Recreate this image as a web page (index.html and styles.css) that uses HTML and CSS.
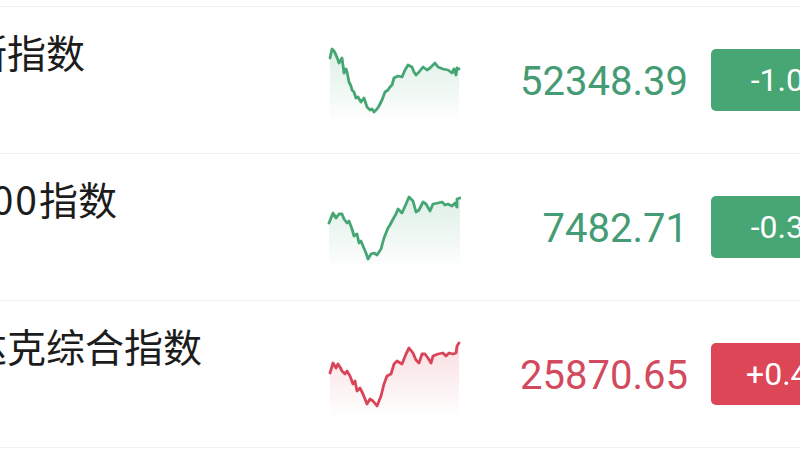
FILE: index.html
```html
<!DOCTYPE html>
<html lang="zh-CN">
<head>
    <meta charset="UTF-8">
    <meta name="viewport" content="width=device-width, initial-scale=1.0">
    <title>全球指数</title>
    <link rel="stylesheet" href="styles.css">
</head>
<body>
    <div class="index-list">
        <div class="index-row down">
            <div class="index-name">道琼斯指数</div>
            <svg class="spark" width="134" height="80" viewBox="0 0 134 80">
                <defs>
                    <linearGradient id="fillGreen1" x1="0" y1="0" x2="0" y2="1">
                        <stop offset="0" stop-color="#45a673" stop-opacity="0.18"/>
                        <stop offset="1" stop-color="#45a673" stop-opacity="0"/>
                    </linearGradient>
                </defs>
                <path class="area" fill="url(#fillGreen1)" d="M3 15 L5 6 L9 12 L12 20 L15 15 L17 30 L20 29 L22 39 L25 47 L27 49 L29 55 L31 54 L34 59 L37 55 L40 64 L43 67 L47 69 L50 66 L55 57 L58 49 L61 47 L65 42 L67 35 L71 33 L75 34 L78 27 L81 22 L85 24 L89 32 L92 29 L96 24 L100 27 L103 25 L108 20 L111 24 L116 26 L121 27 L125 30 L127 26 L129 32 L130 25 L132 26 L132 80 L3 80 Z"/>
                <path class="line" d="M3 15 L5 6 L7 8 L9 12 L11 17 L12 20 L15 15 L17 30 L19 26 L20 29 L22 39 L24 43 L25 47 L27 49 L29 55 L31 54 L34 59 L37 55 L40 64 L43 67 L45 66 L47 69 L50 66 L52 63 L55 57 L58 49 L61 47 L63 44 L65 42 L67 35 L71 33 L75 34 L78 27 L81 22 L85 24 L87 29 L89 32 L92 29 L96 24 L100 27 L103 25 L106 22 L108 20 L111 24 L116 26 L121 27 L125 30 L127 26 L129 32 L130 25 L132 26"/>
            </svg>
            <div class="index-price">52348.39</div>
            <div class="index-change">-1.05%</div>
        </div>

        <div class="index-row down">
            <div class="index-name">标普<span class="num">500</span>指数</div>
            <svg class="spark" width="134" height="80" viewBox="0 0 134 80">
                <defs>
                    <linearGradient id="fillGreen2" x1="0" y1="0" x2="0" y2="1">
                        <stop offset="0" stop-color="#45a673" stop-opacity="0.18"/>
                        <stop offset="1" stop-color="#45a673" stop-opacity="0"/>
                    </linearGradient>
                </defs>
                <path class="area" fill="url(#fillGreen2)" d="M2 33 L6 23 L9 28 L12 24 L15 24 L17 29 L20 33 L22 31 L25 39 L27 46 L30 44 L32 53 L36 56 L39 63 L41 69 L44 64 L47 63 L50 65 L54 59 L57 48 L61 38 L65 31 L69 24 L71 19 L75 23 L79 14 L82 7 L86 11 L89 22 L92 20 L96 12 L99 14 L103 21 L106 14 L111 13 L115 12 L118 15 L121 14 L125 16 L128 13 L130 17 L130 9 L133 8 L133 80 L2 80 Z"/>
                <path class="line" d="M2 33 L6 23 L9 28 L12 24 L15 24 L17 29 L20 33 L22 31 L25 39 L27 46 L30 44 L32 53 L34 51 L36 56 L39 63 L41 69 L44 64 L47 63 L50 65 L54 59 L57 48 L61 38 L63 35 L65 31 L69 24 L71 19 L75 23 L79 14 L82 7 L86 11 L89 22 L92 20 L96 12 L99 14 L103 21 L106 14 L111 13 L115 12 L118 15 L121 14 L125 16 L128 13 L130 17 L130 9 L133 8"/>
            </svg>
            <div class="index-price">7482.71</div>
            <div class="index-change">-0.32%</div>
        </div>

        <div class="index-row up">
            <div class="index-name">纳斯达克综合指数</div>
            <svg class="spark" width="134" height="80" viewBox="0 0 134 80">
                <defs>
                    <linearGradient id="fillRed" x1="0" y1="0" x2="0" y2="1">
                        <stop offset="0" stop-color="#dc4656" stop-opacity="0.18"/>
                        <stop offset="1" stop-color="#dc4656" stop-opacity="0"/>
                    </linearGradient>
                </defs>
                <path class="area" fill="url(#fillRed)" d="M3 36 L6 26 L9 31 L11 27 L15 34 L18 37 L20 34 L23 39 L26 47 L28 44 L30 54 L33 51 L36 57 L40 67 L43 62 L46 64 L50 69 L54 59 L57 47 L60 39 L64 37 L67 27 L70 24 L75 27 L79 17 L82 11 L86 16 L89 23 L92 26 L95 17 L98 17 L101 21 L104 26 L106 19 L111 17 L116 16 L119 19 L122 16 L126 17 L129 16 L130 9 L132 6 L132 80 L3 80 Z"/>
                <path class="line" d="M3 36 L6 26 L9 31 L11 27 L13 30 L15 34 L18 37 L20 34 L23 39 L26 47 L28 44 L30 54 L33 51 L36 57 L38 62 L40 67 L43 62 L46 64 L50 69 L54 59 L57 47 L60 39 L64 37 L67 27 L70 24 L75 27 L79 17 L82 11 L86 16 L89 23 L92 26 L95 17 L98 17 L101 21 L104 26 L106 19 L111 17 L116 16 L119 19 L122 16 L126 17 L129 16 L130 9 L132 6"/>
            </svg>
            <div class="index-price">25870.65</div>
            <div class="index-change">+0.48%</div>
        </div>
    </div>
</body>
</html>
```

FILE: styles.css
```css
body {
    margin: 0;
    background: #fff;
    font-family: Roboto, "Noto Sans", "Noto Sans CJK SC", sans-serif;
    overflow: hidden;
}

.index-list {
    margin-top: 6px;
    margin-left: -110px;
    width: 1110px;
    border-top: 1px solid #f1f1f1;
}

.index-row {
    display: flex;
    align-items: center;
    height: 146px;
    border-bottom: 1px solid #f1f1f1;
}

.index-name {
    align-self: flex-start;
    width: 437px;
    padding-top: 25px;
    font-family: "Noto Sans CJK SC", sans-serif;
    font-size: 39px;
    line-height: 1;
    color: #1c1c1c;
    white-space: nowrap;
}

.index-name .num {
    letter-spacing: 2px;
}

.spark {
    display: block;
    margin-top: 6px;
    flex-shrink: 0;
}

.spark .line {
    fill: none;
    stroke-width: 2.8;
    stroke-linejoin: round;
    stroke-linecap: round;
}

.index-price {
    width: 227px;
    margin-top: 4px;
    text-align: right;
    font-size: 40px;
    line-height: 1;
}

.index-change {
    width: 174px;
    height: 62px;
    margin-left: 23px;
    border-radius: 5px;
    color: #fff;
    font-size: 32px;
    line-height: 62px;
    text-align: center;
}

.down .line { stroke: #45a673; }
.down .index-price { color: #449b74; }
.down .index-change { background: #47a674; }

.up .line { stroke: #d94458; }
.up .index-price { color: #d24a5d; }
.up .index-change { background: #dc4656; }
```
